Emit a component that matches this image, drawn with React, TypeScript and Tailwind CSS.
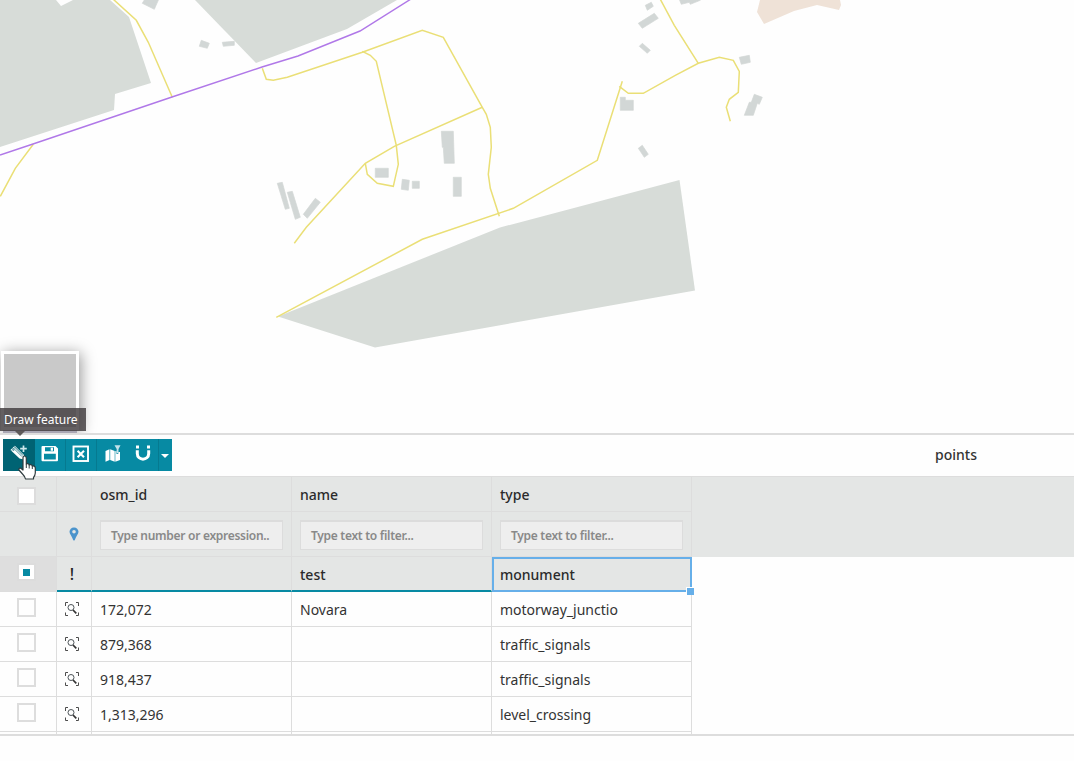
import type { ReactNode } from 'react';

const BUILDINGS = [
  '145,-2 142,3 154,9 158,0 156,-2',
  '201,40 209,43 207,48 199,46',
  '222,42 234,41 234,45 223,46',
  '277,183 282,182 289,208 285,209',
  '287,192 292,191 300,217 295,219',
  '315,198 320,202 307,218 303,214',
  '375,168 388,168 388,177 375,177',
  '402,179 409,180 408,190 401,189',
  '412,181 419,181 419,188 412,188',
  '441,131 453,131 454,163 444,163 443,147 442,147',
  '453,177 461,177 461,196 453,196',
  '645,5 651,2 653,6 647,10',
  '638,23 654,13 658,18 642,28',
  '642,43 650,50 647,53 639,46',
  '679,-1 681,4 689,2 690,4 700,0 700,-1',
  '739,57 749,55 750,62 741,64',
  '754,94 762,97 759,104 757,103 753,115 744,115 749,102 751,102',
  '620,97 625,97 625,100 633,100 633,110 620,110',
  '638,148 642,145 648,154 644,157',
];

const ROADS = [
  '0,196 15,168 33,144',
  '113,-1 136,20 148,42 172,97',
  '262,68 266,79 273,80 287,77 362,52 422,30 443,37 482,107 486,114 490,127 491,147 488,174 490,188 499,216',
  '362,51 370,55 376,61 396,145 398,164 393,186 377,183 367,174 365,163',
  '482,107 394,146 365,163 306,227 294,243',
  '276,317 422,239 513,208 597,160 622,81',
  '619,86 628,93 643,93 675,75 698,63 719,57 733,60 739,71 738,92 729,99 726,107 730,121',
  '660,-1 674,25 698,63',
];

function MapCanvas() {
  return (
    <svg className="block h-[433px] w-[1074px]" viewBox="0 0 1074 433">
      <rect width="1074" height="433" fill="#fefefe" />
      <g fill="#d7dcd8">
        <path d="M0 0H56L61 6L73 0H110L129 17L151 83L115 94L114 110L0 147Z" />
        <path d="M195 0L256 63L347 29L397 0Z" />
        <path d="M278 316.500L500 227.500L679.500 180L695 290.500L375 347.500Z" />
      </g>
      <path d="M760 0L757 12L764 24L794 11L817 5L839 10L841 5L840 0Z" fill="#efe2d7" />
      <g fill="#d2d7d6" stroke="#d2d7d6" strokeWidth="0.7" transform="translate(.3 .3)">
        {BUILDINGS.map((p) => (
          <polygon key={p} points={p} />
        ))}
      </g>
      <g fill="none" stroke="#eadf76" strokeWidth="1.5" transform="translate(.3 .3)">
        {ROADS.map((p) => (
          <polyline key={p} points={p} />
        ))}
      </g>
      <polyline points="0,155 33,144 172,97 262,67 298,56 360,31 411,-1" fill="none" stroke="#b078e8" strokeWidth="1.4" />
    </svg>
  );
}

function Icon({ children }: { children: ReactNode }) {
  return (
    <svg className="block h-[18px] w-[18px]" viewBox="0 0 18 18" fill="none">
      {children}
    </svg>
  );
}

function DrawIcon() {
  return (
    <Icon>
      <path d="M0.500 6L4.800 1.800L13.500 10.500L15.500 16L9.500 14.500Z" fill="#fff" />
      <path d="M4.200 2.600L12.800 11.200M1.800 6.600L4.800 3.600" stroke="#006373" strokeWidth="0.9" />
      <path d="M2.200 3.800L3.600 5.200M3.200 7L4.800 5.400L12 12.600" stroke="#006373" strokeWidth="0.7" />
      <path d="M13.500 1.500v6.500M10.200 4.700h6.600" stroke="#cfe8ec" strokeWidth="1.700" />
    </Icon>
  );
}

function SaveIcon() {
  return (
    <Icon>
      <path fillRule="evenodd" fill="#fff" d="M.5 2Q.5 1 1.500 1H14.500L17 3.500V15Q17 16.300 16 16.300H1.500Q.5 16.300 .5 15ZM4 2.300V6.200H13V2.300ZM9.700 2.800H12V5.700H9.700ZM3 8.800V14.500H14.800V8.800Z" />
    </Icon>
  );
}

function ClearIcon() {
  return (
    <Icon>
      <rect x="1.500" y="1.500" width="14.500" height="14.500" stroke="#fff" strokeWidth="1.900" />
      <path d="M5.600 5.800L12 12.200M12 5.800L5.600 12.200" stroke="#fff" strokeWidth="2.100" />
    </Icon>
  );
}

function MapFilterIcon() {
  return (
    <Icon>
      <path d="M1.500 6L5.500 4.300V15L1.500 16.700ZM6.200 4.300L10.700 6V16.700L6.200 15ZM11.300 6.200L12.500 5.700V9H14.300V7H16V15L11.300 16.700Z" fill="#fff" />
      <path d="M10.500 .3H16.500L14.500 4V8.300H12.700V4Z" fill="#c2e2ea" />
    </Icon>
  );
}

function MagnetIcon() {
  return (
    <Icon>
      <path d="M3.300 6.200V9.500C3.300 17 14.700 17 14.700 9.500V6.200" stroke="#fff" strokeWidth="3" />
      <path d="M2 1.500h3v3h-3zM13 1.500h3v3h-3z" fill="#fff" />
    </Icon>
  );
}

function ZoomToIcon() {
  return (
    <svg className="block h-[14px] w-[14px]" viewBox="0 0 14 14" fill="none">
      <path d="M.5 4V.5H3M11 .5H13.500V4M.5 10.500V13.500H3M11 13.500H13.500V10.500" stroke="#4d4d4d" />
      <circle cx="6" cy="5.500" r="3" stroke="#4d5458" />
      <path d="M8 8L11.300 11.300" stroke="#333" strokeWidth="1.700" />
    </svg>
  );
}

function Checkbox({ checked = false, filled = false }: { checked?: boolean; filled?: boolean }) {
  if (filled || checked) {
    return (
      <span className="flex h-[18px] w-[19px] items-center justify-center border-2 border-[#dcdcdc] bg-white">
        {checked && <span className="h-[7px] w-[7px] bg-[#078aa3]" />}
      </span>
    );
  }
  return <span className="block h-[19px] w-[19px] border-2 border-[#dddddd] bg-[#fefefe]" />;
}

const COLS = 'grid grid-cols-[57px_35px_200px_200px_200px]';
const CELL = 'border-r border-b border-[#dddddd]';
const TEXT_CELL = 'flex items-center border-r border-b border-[#dddddd] pl-2 text-sm';

const ROWS = [
  ['172,072', 'Novara', 'motorway_junctio'],
  ['879,368', '', 'traffic_signals'],
  ['918,437', '', 'traffic_signals'],
  ['1,313,296', '', 'level_crossing'],
];

function FilterInput({ text }: { text: string }) {
  return (
    <div className="flex h-[30px] w-[183px] items-center border border-t-2 border-[#dcdcdc] bg-[#eeeeee] pl-[10px] text-[12px] font-semibold tracking-[-0.29px] whitespace-nowrap text-[#898989]">
      {text}
    </div>
  );
}

export default function App() {
  return (
    <main className="relative flex h-[761px] w-[1074px] flex-col overflow-hidden bg-[#fefefe] font-['Noto_Sans',sans-serif] text-[#333333]">
      <section className="relative h-[433px] shrink-0 overflow-hidden">
        <MapCanvas />
        <div className="absolute top-[351px] left-[1px] h-[79px] w-[78px] border-[3px] border-white bg-[#c9c9c9] shadow-[2px_2px_14px_rgba(0,0,0,0.4)]" />
        <div className="absolute top-[430px] left-[3px] h-[3px] w-[74px] bg-[#a9a7b4]" />
      </section>

      <section className="flex h-11 shrink-0 items-start justify-between border-t-2 border-b border-t-[#dddddd] border-b-[#dddddd] pt-1 pl-[3px]">
        <div className="flex h-8 bg-[#078aa3]">
          <button className="flex w-8 justify-center bg-[#006373] pt-[5px]"><DrawIcon /></button>
          <button className="flex w-[31px] justify-center border-r border-[#067a90] pt-[6px]"><SaveIcon /></button>
          <button className="flex w-[31px] justify-center border-r border-[#067a90] pt-[6px]"><ClearIcon /></button>
          <button className="flex w-[31px] justify-center pt-[6px]"><MapFilterIcon /></button>
          <button className="flex w-[31px] justify-center border-r border-[#067a90] pt-[5px]"><MagnetIcon /></button>
          <button className="flex w-[13px] justify-center pt-[15px] pr-[2px]">
            <svg className="h-1 w-2 shrink-0" viewBox="0 0 8 4"><path d="M0 0H8L4 4Z" fill="#fff" /></svg>
          </button>
        </div>
        <h1 className="mr-[97px] pt-[6px] text-sm leading-5 font-medium">points</h1>
      </section>

      <section className="h-[259px] shrink-0 overflow-hidden border-b-2 border-[#dddddd]">
        <div className="bg-[#e4e6e5]">
          <div className={`${COLS} h-[35px]`}>
            <div className={`${CELL} flex items-center justify-center pr-1 pt-1`}><Checkbox filled /></div>
            <div className={CELL} />
            {['osm_id', 'name', 'type'].map((name) => (
              <div key={name} className={`${TEXT_CELL} pt-[2px] font-medium text-[#2b2b2b] first-of-type:pl-2`}>{name}</div>
            ))}
          </div>
          <div className={`${COLS} h-[45px]`}>
            <div className={CELL} />
            <div className={`${CELL} flex items-center justify-center`}>
              <svg className="h-[14px] w-[10px]" viewBox="0 0 10 14">
                <path fillRule="evenodd" d="M5 .5A4.300 4.300 0 0 0 .5 4.800C.5 7 3 9.500 4.200 13Q5 14 5.800 13C7 9.500 9.500 7 9.500 4.800A4.300 4.300 0 0 0 5 .5ZM5 3A1.800 1.800 0 1 1 5 6.600A1.800 1.800 0 0 1 5 3Z" fill="#4b94cc" />
              </svg>
            </div>
            {['Type number or expression..', 'Type text to filter...', 'Type text to filter...'].map((text, i) => (
              <div key={i} className={`${CELL} flex items-center pt-[2px] pl-2`}><FilterInput text={text} /></div>
            ))}
          </div>
        </div>

        <div className={`${COLS} h-[35px] w-[692px] bg-[#e4e6e5]`}>
          <div className="flex items-center justify-center border-r border-b border-[#dddddd] bg-[#dedede] pr-1 pb-1"><Checkbox checked /></div>
          <div className="flex items-center justify-center border-r border-b-2 border-r-[#dddddd] border-b-[#078aa3] pr-1 text-base font-medium text-[#222222]">!</div>
          <div className="border-r border-b-2 border-r-[#dddddd] border-b-[#078aa3]" />
          <div className="flex items-center border-r border-b-2 border-r-[#dddddd] border-b-[#078aa3] pt-[2px] pl-2 text-sm font-medium text-[#2b2b2b]">test</div>
          <div className="relative flex items-center border-2 border-[#66afe9] pl-[6px] text-sm font-medium text-[#2b2b2b]">
            monument
            <span className="absolute right-[-4px] bottom-[-5px] h-[8px] w-[8px] border-t border-l border-white bg-[#66afe9]" />
          </div>
        </div>

        {ROWS.map(([id, name, type]) => (
          <div key={id} className={`${COLS} h-[35px]`}>
            <div className={`${CELL} flex justify-center pt-[6px] pr-1`}><Checkbox /></div>
            <div className={`${CELL} flex justify-center pt-[10px] pr-1`}><ZoomToIcon /></div>
            <div className={`${TEXT_CELL} pt-[2px]`}>{id}</div>
            <div className={`${TEXT_CELL} pt-[2px]`}>{name}</div>
            <div className={`${TEXT_CELL} pt-[2px]`}>{type}</div>
          </div>
        ))}
        <div className={`${COLS} h-[35px]`}>
          {[0, 1, 2, 3, 4].map((i) => <div key={i} className={CELL} />)}
        </div>
      </section>

      <div className="absolute top-[408px] left-0 h-[23px] w-[86px] bg-[rgba(65,60,62,0.82)] pl-1 text-[12px] leading-[23px] text-white">
        Draw feature
      </div>
      <svg className="absolute top-[431px] left-[14px] h-[5px] w-3" viewBox="0 0 12 5">
        <path d="M1 0H11L6 5Z" fill="#5d5959" />
      </svg>
      <svg className="absolute top-[455px] left-[18px] h-[26px] w-[20px]" viewBox="0 0 20 26">
        <path d="M5 3Q5 1 6.500 1T8.300 3V9Q10.500 8 11.200 10Q13.500 9 14.300 11Q17 10.500 17.300 13V18Q17 21 15.500 22.500V24H7.500Q7 21.500 4.500 19L1 15Q.5 13 2.500 13L5 15Z" fill="#fff" stroke="#2d3a3d" strokeWidth="1.200" strokeLinejoin="round" />
        <path d="M8.300 9v4M11.200 10v3.500M14.300 11v3" stroke="#2d3a3d" />
      </svg>
    </main>
  );
}
